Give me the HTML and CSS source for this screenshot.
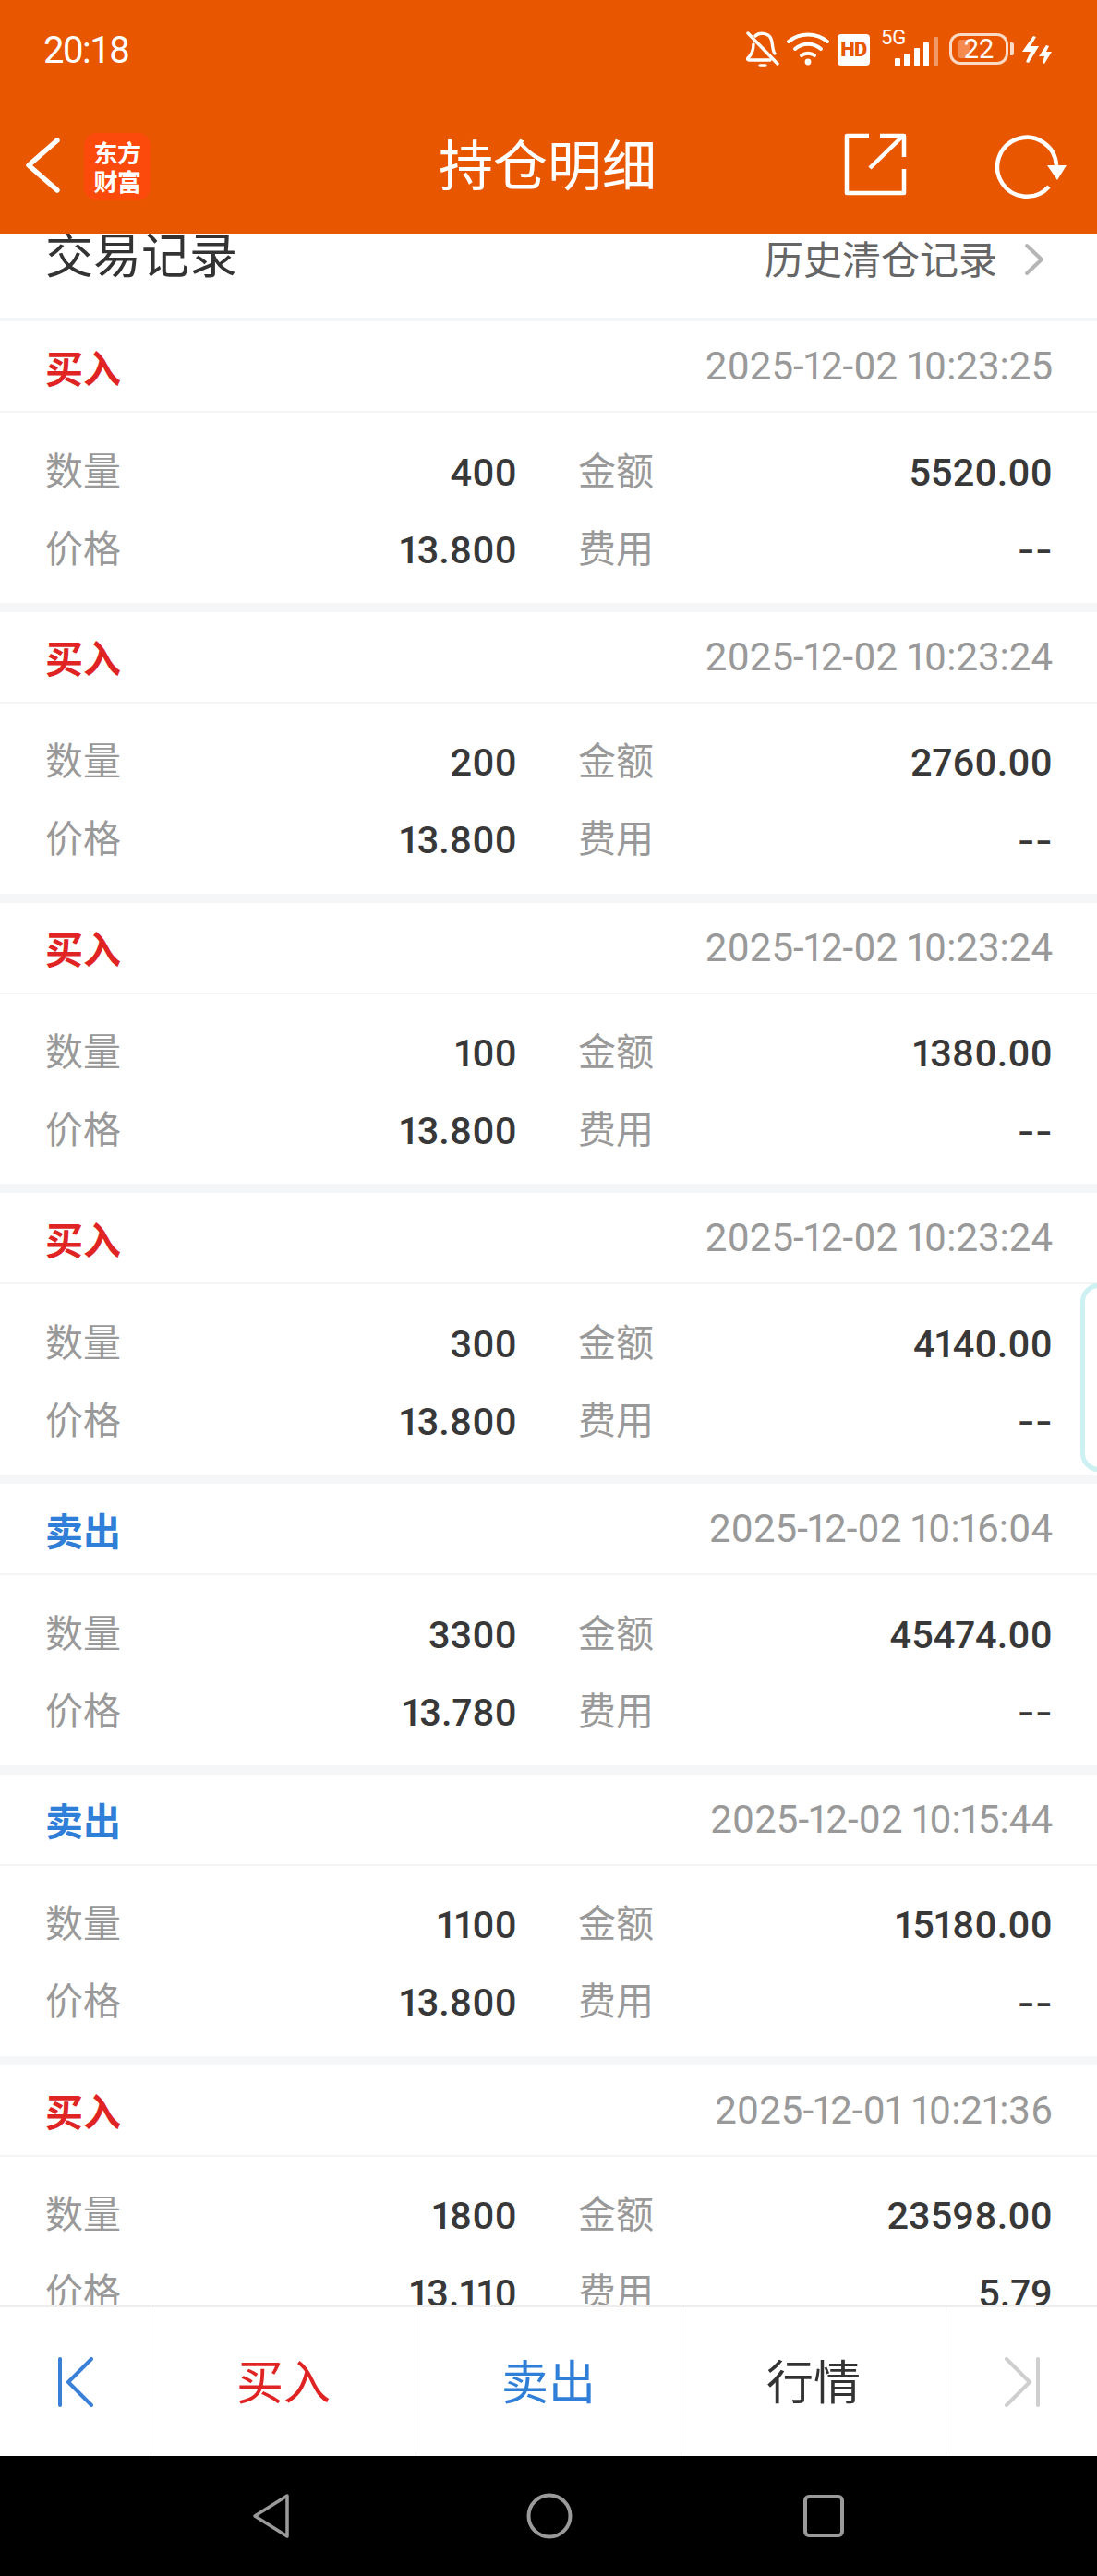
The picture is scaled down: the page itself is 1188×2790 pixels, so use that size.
FILE: index.html
```html
<!DOCTYPE html>
<html lang="zh-CN">
<head>
    <meta charset="UTF-8">
    <meta name="viewport" content="width=device-width, initial-scale=1.0">
    <title>持仓明细</title>
    <link rel="stylesheet" href="styles.css">
</head>
<body>

    <div class="top">
        <div class="status">
            <span class="time">20:18</span>
            <div class="status-icons">
                <svg class="ico-bell" width="36" height="40" viewBox="0 0 36 40" fill="none" stroke="#fff" stroke-width="3.4" stroke-linecap="round" stroke-linejoin="round">
                    <path d="M2 2 L34 35"/>
                    <path d="M10 5 C14 1 24 1 27 8 C29 12 28 20 31 24"/>
                    <path d="M8 14 C8 20 7 24 2 29 C1 30 2 31 3 31 L26 31"/>
                    <path d="M15 37 L21 37"/>
                </svg>
                <svg class="ico-wifi" width="46" height="36" viewBox="0 0 46 36" fill="none" stroke="#fff" stroke-width="4" stroke-linecap="round">
                    <path d="M2 10 C14 0 32 0 44 10"/>
                    <path d="M9 18 C17 11 29 11 37 18"/>
                    <path d="M16 25 C20 22 26 22 30 25"/>
                    <circle cx="23" cy="32" r="3.4" fill="#fff" stroke="none"/>
                </svg>
                <span class="hd">HD</span>
                <div class="signal">
                    <span class="net">5G</span>
                    <svg width="48" height="32" viewBox="0 0 48 32" fill="#fff">
                        <rect x="0" y="23" width="6" height="9" rx="1"/>
                        <rect x="10" y="18" width="6" height="14" rx="1"/>
                        <rect x="21" y="12" width="6" height="20" rx="1"/>
                        <rect x="31" y="6" width="6" height="26" rx="1"/>
                        <rect x="42" y="0" width="5" height="32" rx="1" opacity=".4"/>
                    </svg>
                </div>
                <div class="battery">
                    <span class="battery-level"></span>
                    <span class="battery-num">22</span>
                </div>
                <span class="battery-cap"></span>
                <svg class="ico-bolt" width="33" height="30" viewBox="0 0 33 30" fill="#fff">
                    <path d="M13 0 L16 1 L10 11 L19 11 L8 29 L5 28 L10 17 L1 17 Z"/>
                    <path d="M27 10 L30 11 L27 17 L33 17 L25 30 L23 29 L25 22 L19 22 Z"/>
                </svg>
            </div>
        </div>
        <div class="titlebar">
            <svg class="ico-back" width="40" height="62" viewBox="0 0 40 62" fill="none" stroke="#fff" stroke-width="5.5" stroke-linecap="round" stroke-linejoin="round">
                <path d="M35 4 L4 31 L35 58"/>
            </svg>
            <div class="logo"><span>东方</span><span>财富</span></div>
            <h1>持仓明细</h1>
            <svg class="ico-share" width="68" height="68" viewBox="0 0 68 68" fill="none" stroke="#fff" stroke-width="4.5" stroke-linejoin="round">
                <path d="M27 3 L3 3 L3 65 L65 65 L65 39"/>
                <path d="M28 38 L64 3"/>
                <path d="M39 3 L65 3 L65 26"/>
            </svg>
            <svg class="ico-refresh" width="78" height="70" viewBox="0 0 78 70" fill="none">
                <path d="M58 56 A32 32 0 1 1 66 33" stroke="#fff" stroke-width="4.5"/>
                <path d="M56 33 L77 33 L67 49 Z" fill="#fff"/>
            </svg>
        </div>
    </div>

    <div class="content">
        <div class="section-head">
            <span class="section-title">交易记录</span>
            <span class="history">历史清仓记录</span>
            <svg class="ico-more" width="24" height="36" viewBox="0 0 24 36" fill="none" stroke="#b5b5b5" stroke-width="4" stroke-linecap="round" stroke-linejoin="round">
                <path d="M4 3 L20 18 L4 33"/>
            </svg>
        </div>

        <div class="card">
            <div class="card-head"><span class="buy">买入</span><span class="date">2025-12-02 10:23:25</span></div>
            <div class="card-body">
                <span class="label">数量</span><span class="value">400</span><span class="label">金额</span><span class="value">5520.00</span>
                <span class="label">价格</span><span class="value">13.800</span><span class="label">费用</span><span class="value dash">--</span>
            </div>
        </div>

        <div class="card">
            <div class="card-head"><span class="buy">买入</span><span class="date">2025-12-02 10:23:24</span></div>
            <div class="card-body">
                <span class="label">数量</span><span class="value">200</span><span class="label">金额</span><span class="value">2760.00</span>
                <span class="label">价格</span><span class="value">13.800</span><span class="label">费用</span><span class="value dash">--</span>
            </div>
        </div>

        <div class="card">
            <div class="card-head"><span class="buy">买入</span><span class="date">2025-12-02 10:23:24</span></div>
            <div class="card-body">
                <span class="label">数量</span><span class="value">100</span><span class="label">金额</span><span class="value">1380.00</span>
                <span class="label">价格</span><span class="value">13.800</span><span class="label">费用</span><span class="value dash">--</span>
            </div>
        </div>

        <div class="card">
            <div class="card-head"><span class="buy">买入</span><span class="date">2025-12-02 10:23:24</span></div>
            <div class="card-body">
                <span class="label">数量</span><span class="value">300</span><span class="label">金额</span><span class="value">4140.00</span>
                <span class="label">价格</span><span class="value">13.800</span><span class="label">费用</span><span class="value dash">--</span>
            </div>
        </div>

        <div class="card">
            <div class="card-head"><span class="sell">卖出</span><span class="date">2025-12-02 10:16:04</span></div>
            <div class="card-body">
                <span class="label">数量</span><span class="value">3300</span><span class="label">金额</span><span class="value">45474.00</span>
                <span class="label">价格</span><span class="value">13.780</span><span class="label">费用</span><span class="value dash">--</span>
            </div>
        </div>

        <div class="card">
            <div class="card-head"><span class="sell">卖出</span><span class="date">2025-12-02 10:15:44</span></div>
            <div class="card-body">
                <span class="label">数量</span><span class="value">1100</span><span class="label">金额</span><span class="value">15180.00</span>
                <span class="label">价格</span><span class="value">13.800</span><span class="label">费用</span><span class="value dash">--</span>
            </div>
        </div>

        <div class="card">
            <div class="card-head"><span class="buy">买入</span><span class="date">2025-12-01 10:21:36</span></div>
            <div class="card-body">
                <span class="label">数量</span><span class="value">1800</span><span class="label">金额</span><span class="value">23598.00</span>
                <span class="label">价格</span><span class="value">13.110</span><span class="label">费用</span><span class="value">5.79</span>
            </div>
        </div>
    </div>

    <div class="side-tab"></div>

    <div class="actions">
        <div class="action action-end">
            <svg width="40" height="54" viewBox="0 0 40 54" fill="none" stroke="#3a80d6" stroke-width="4" stroke-linecap="round" stroke-linejoin="round">
                <path d="M3 2 L3 52"/>
                <path d="M37 2 L12 27 L37 52"/>
            </svg>
        </div>
        <div class="action buy"><span>买入</span></div>
        <div class="action sell"><span>卖出</span></div>
        <div class="action"><span>行情</span></div>
        <div class="action action-end">
            <svg width="40" height="54" viewBox="0 0 40 54" fill="none" stroke="#cfcfcf" stroke-width="4" stroke-linecap="round" stroke-linejoin="round">
                <path d="M37 2 L37 52"/>
                <path d="M3 2 L28 27 L3 52"/>
            </svg>
        </div>
    </div>

    <div class="navbar">
        <svg width="42" height="50" viewBox="0 0 42 50" fill="none" stroke="#9a9a9a" stroke-width="3.5" stroke-linejoin="round">
            <path d="M39 3 L4 25 L39 47 Z"/>
        </svg>
        <svg width="50" height="50" viewBox="0 0 50 50" fill="none" stroke="#9a9a9a" stroke-width="4">
            <circle cx="25" cy="25" r="22.5"/>
        </svg>
        <svg width="46" height="48" viewBox="0 0 46 48" fill="none" stroke="#9a9a9a" stroke-width="4">
            <rect x="3" y="3" width="40" height="42" rx="4"/>
        </svg>
    </div>

</body>
</html>
```

FILE: styles.css
```css
* {
    box-sizing: border-box;
}

body {
    margin: 0;
    padding: 0;
    width: 1188px;
    height: 2790px;
    display: flex;
    flex-direction: column;
    position: relative;
    overflow: hidden;
    background-color: white;
    color: #333;
    font-family: "Noto Sans CJK SC", Roboto, sans-serif;
}

.top {
    background-color: #e85600;
    color: white;
    height: 253px;
    flex: none;
}

.status {
    height: 108px;
    padding: 30px 49px 0 47px;
    display: flex;
    justify-content: space-between;
    align-items: flex-start;
}

.time {
    font-family: Roboto, sans-serif;
    font-size: 40px;
    line-height: 46px;
    letter-spacing: -1.5px;
    margin-top: 2px;
}

.status-icons {
    display: flex;
    align-items: flex-start;
    margin-top: 4px;
}

.ico-bell {
    margin-right: 8px;
}

.ico-wifi {
    margin-top: 1px;
    margin-right: 9px;
}

.hd {
    width: 35px;
    height: 34px;
    margin-top: 3px;
    margin-right: 12px;
    border-radius: 4px;
    background-color: white;
    color: #e85600;
    font-family: Roboto, sans-serif;
    font-size: 22px;
    font-weight: 900;
    line-height: 34px;
    text-align: center;
    letter-spacing: -.5px;
}

.signal {
    position: relative;
    width: 62px;
    height: 36px;
    padding: 6px 0 0 15px;
    margin-right: 12px;
}

.net {
    position: absolute;
    left: 0;
    top: -5px;
    font-family: Roboto, sans-serif;
    font-size: 22px;
    line-height: 24px;
}

.battery {
    position: relative;
    width: 64px;
    height: 34px;
    margin-top: 2px;
    border: 3px solid #fbd9c4;
    border-radius: 12px;
}

.battery-level {
    position: absolute;
    left: 6px;
    top: 4px;
    width: 13px;
    height: 20px;
    border-radius: 4px 0 0 4px;
    background-color: #f58a4f;
}

.battery-num {
    position: absolute;
    left: 0;
    right: 0;
    top: -3px;
    text-align: center;
    font-family: Roboto, sans-serif;
    font-size: 29px;
    line-height: 34px;
    font-weight: 400;
}

.battery-cap {
    width: 4px;
    height: 14px;
    margin: 12px 8px 0 2px;
    background-color: #fbd9c4;
    border-radius: 0 2px 2px 0;
}

.ico-bolt {
    margin-top: 5px;
}

.titlebar {
    position: relative;
    height: 145px;
    display: flex;
    align-items: center;
    padding-left: 27px;
}

.ico-back {
    margin-top: -3px;
}

.logo {
    width: 72px;
    height: 73px;
    margin: -1px 0 0 24px;
    padding-top: 5px;
    border-radius: 14px;
    background-color: #fb4a0c;
    display: flex;
    flex-direction: column;
    align-items: center;
    font-size: 26px;
    font-weight: 700;
    line-height: 31px;
}

.logo span {
    letter-spacing: -.5px;
}

.titlebar h1 {
    position: absolute;
    left: 0;
    width: 1186px;
    margin: 0;
    margin-top: -9px;
    text-align: center;
    font-size: 59px;
    font-weight: 400;
    line-height: 80px;
}

.ico-share {
    margin-left: auto;
    margin-right: 0;
    margin-top: -5px;
}

.ico-refresh {
    margin-left: 96px;
    margin-right: 32px;
}

.content {
    flex: 1;
    min-height: 0;
    overflow: hidden;
    background-color: #f5f6f8;
}

.section-head {
    height: 91px;
    margin-bottom: 4px;
    padding: 0 6px 0 49px;
    background-color: white;
    display: flex;
    align-items: flex-start;
}

.section-title {
    font-size: 52px;
    line-height: 50px;
    margin-top: -4px;
}

.history {
    margin-left: auto;
    margin-right: 28px;
    color: #666;
    font-size: 42px;
    line-height: 52px;
}

.ico-more {
    margin-top: 10px;
    margin-right: 50px;
}

.card {
    height: 304.8px;
    margin-bottom: 10px;
    background-color: white;
}

.card-head {
    height: 99px;
    padding: 0 48px 0 49px;
    border-bottom: 2px solid #f4f4f4;
    display: flex;
    justify-content: space-between;
    align-items: center;
}

.buy {
    color: #e02424;
}

.sell {
    color: #2f7ed8;
}

.card-head .buy,
.card-head .sell {
    font-size: 41px;
    font-weight: 700;
    line-height: 56px;
}

.date {
    color: #999;
    font-family: Roboto, sans-serif;
    font-size: 42px;
    font-variant-numeric: proportional-nums;
}

.card-body {
    padding: 20px 48px 0 49px;
    display: grid;
    grid-template-columns: 100px 411px 100px 1fr;
    grid-auto-rows: 84px;
    align-items: center;
}

.label {
    color: #999;
    font-size: 41px;
    line-height: 56px;
    margin-top: -5px;
}

.label:nth-child(4n+3) {
    margin-left: 66px;
    white-space: nowrap;
}

.value {
    color: #383838;
    font-family: Roboto, sans-serif;
    font-size: 41.5px;
    font-weight: 500;
    text-align: right;
    font-variant-numeric: proportional-nums;
    margin-top: 4px;
}

.dash {
    font-family: Inter, sans-serif;
}

.side-tab {
    position: absolute;
    left: 1170px;
    top: 1390px;
    width: 40px;
    height: 204px;
    border: 5px solid #cdf1f2;
    border-radius: 26px;
}

.actions {
    height: 163px;
    flex: none;
    display: grid;
    grid-template-columns: 163px 287px 287px 287px 164px;
    border-top: 2px solid #eee;
    background-color: white;
}

.action {
    display: flex;
    align-items: center;
    justify-content: center;
    font-size: 51px;
    border-left: 1px solid #f1f1f1;
}

.action span {
    margin-top: -6px;
}

.action-end:first-child {
    border-left: none;
}

.navbar {
    height: 130px;
    flex: none;
    padding-left: 272px;
    background-color: black;
    display: flex;
    align-items: center;
}

.navbar svg:nth-child(2) {
    margin-left: 256px;
}

.navbar svg:nth-child(3) {
    margin-left: 249px;
}
```
